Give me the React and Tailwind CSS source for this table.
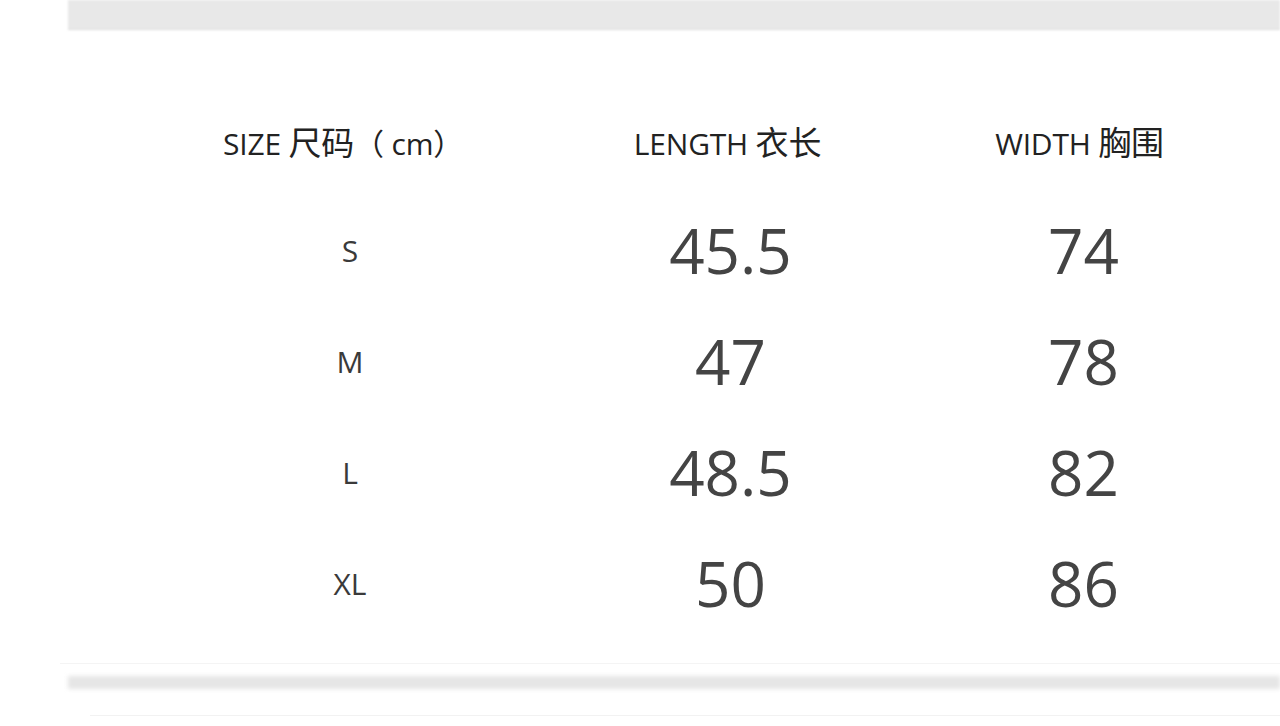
const rows = [
  { size: 'S', length: '45.5', width: '74' },
  { size: 'M', length: '47', width: '78' },
  { size: 'L', length: '48.5', width: '82' },
  { size: 'XL', length: '50', width: '86' },
]

const font = { fontFamily: '"Open Sans", "Noto Sans", "Noto Sans CJK SC", sans-serif' }

export default function App() {
  return (
    <div className="w-[1280px] h-[726px] bg-white overflow-hidden flex flex-col" style={font}>
      {/* top strip */}
      <div className="ml-[68px] h-[30px] bg-[#e8e8e8] border-b border-[#dcdcdc] blur-[1px]" />

      {/* size table */}
      <div className="pl-[160px] mt-[83px]">
        <div className="grid grid-cols-[370px_395px_305px] h-[60px] items-center text-[#222] text-[30px] tracking-[-0.2px]">
          <div className="text-center pr-[4px]">SIZE <span className="text-[33px]">尺码</span>（ cm）</div>
          <div className="text-center">LENGTH <span className="text-[33px]">衣长</span></div>
          <div className="text-center pl-[4px]">WIDTH <span className="text-[33px]">胸围</span></div>
        </div>
        <div className="mt-[22px]">
          {rows.map((r) => (
            <div key={r.size} className="grid grid-cols-[370px_395px_305px] h-[111px] items-center">
              <div className="text-center text-[30px] text-[#3a3a3a] pl-[10px]">{r.size}</div>
              <div className="text-center text-[62px] text-[#444] pl-[6px]">{r.length}</div>
              <div className="text-center text-[62px] text-[#444] pl-[12px]">{r.width}</div>
            </div>
          ))}
        </div>
      </div>

      {/* bottom strip */}
      <div className="mt-[24px] ml-[60px] h-px bg-[#f4f4f4]" />
      <div className="mt-[12px] ml-[68px] h-[13px] bg-[#e6e6e6] blur-[2px]" />
      <div className="mt-[26px] ml-[90px] h-px bg-[#f2f2f2]" />
    </div>
  )
}
